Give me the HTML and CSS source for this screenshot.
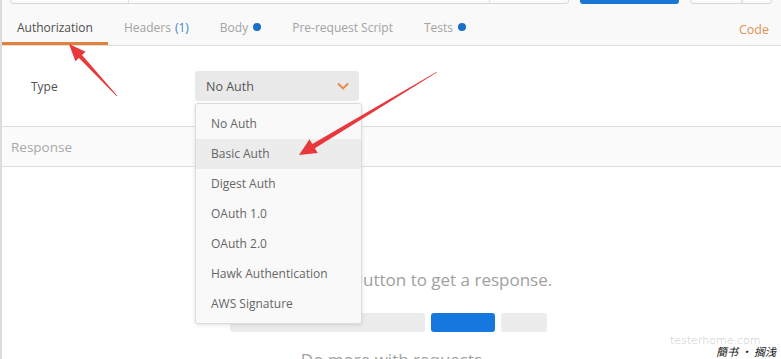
FILE: index.html
```html
<!DOCTYPE html>
<html lang="en">
<head>
    <meta charset="UTF-8">
    <meta name="viewport" content="width=device-width, initial-scale=1.0">
    <title>Authorization</title>
    <link rel="stylesheet" href="styles.css">
</head>
<body>
    <div class="page">
        <!-- url bar, only its lower edge is visible -->
        <div class="url-bar">
            <div class="url-field">
                <span class="seg seg-method"></span>
                <span class="seg seg-url"></span>
                <span class="seg seg-params"></span>
            </div>
            <div class="send-btn"></div>
            <div class="save-btn"><span class="seg seg-save"></span><span class="seg"></span></div>
        </div>

        <div class="tabs">
            <span class="tab active">Authorization</span>
            <span class="tab">Headers <span class="count">(1)</span></span>
            <span class="tab">Body <i class="dot"></i></span>
            <span class="tab">Pre-request Script</span>
            <span class="tab">Tests <i class="dot"></i></span>
            <span class="code-link">Code</span>
        </div>

        <div class="auth-row">
            <span class="auth-label">Type</span>
            <div class="select">
                <span>No Auth</span>
                <svg class="chevron" width="12" height="8" viewBox="0 0 12 8">
                    <path d="M1 1.5 L6 6.5 L11 1.5" fill="none" stroke="#e8873f" stroke-width="1.8"/>
                </svg>
            </div>
        </div>

        <div class="response-head">Response</div>

        <div class="empty">
            <p class="empty-text">Hit the Send button to get a response.</p>
            <div class="empty-bars">
                <span class="bar bar-url"></span>
                <span class="bar bar-send"></span>
                <span class="bar bar-save"></span>
            </div>
            <p class="empty-more">Do more with requests</p>
        </div>

        <ul class="menu">
            <li>No Auth</li>
            <li class="hover">Basic Auth</li>
            <li>Digest Auth</li>
            <li>OAuth 1.0</li>
            <li>OAuth 2.0</li>
            <li>Hawk Authentication</li>
            <li>AWS Signature</li>
        </ul>

        <!-- annotation arrows -->
        <svg class="arrows" width="781" height="359" viewBox="0 0 781 359">
            <polygon fill="#e8383b" points="117.3,95.8 116.7,96.2 79,57.9 75.4,61.2 69,44 85.6,51.8 82,55.1"/>
            <polygon fill="#e8383b" points="437.2,72.3 436.8,71.7 312.3,144.1 309.5,139.3 299,155 317.7,153.1 314.9,148.3"/>
        </svg>

        <div class="watermark">
            <span class="wm-site">testerhome.com</span>
            <span class="wm-name">簡书 • 搁浅</span>
        </div>
    </div>
</body>
</html>
```

FILE: styles.css
```css
body {
    margin: 0;
    font-family: 'Open Sans', 'Noto Sans', sans-serif;
    background: #fff;
}
.page {
    position: relative;
    width: 781px;
    height: 359px;
    overflow: hidden;
    border-left: 2px solid #dcdcdc;
    box-sizing: border-box;
    background: #fff;
}

/* top strip */
.url-bar {
    height: 4px;
    display: flex;
    align-items: flex-end;
    background: #f9f9f9;
    padding-left: 8px;
    overflow: hidden;
}
.url-field {
    display: flex;
    width: 557px;
    height: 30px;
    border: 1px solid #d8d8d8;
    border-radius: 3px;
    background: #fbfbfb;
    flex-shrink: 0;
}
.seg {
    height: 100%;
    border-right: 1px solid #e2e2e2;
}
.seg-method { width: 117px; }
.seg-url { width: 360px; }
.seg-params { border-right: 0; flex: 1; }
.send-btn {
    width: 99px;
    height: 30px;
    margin-left: 11px;
    background: #1976d2;
    border-radius: 3px;
    flex-shrink: 0;
}
.save-btn {
    display: flex;
    width: 80px;
    height: 30px;
    margin-left: 11px;
    border: 1px solid #d8d8d8;
    border-radius: 3px;
    background: #fbfbfb;
    flex-shrink: 0;
}
.seg-save { width: 50px; }

/* tabs */
.tabs {
    display: flex;
    align-items: stretch;
    height: 41px;
    background: #f9f9f9;
    border-bottom: 1px solid #dedede;
    font-size: 12px;
}
.tab {
    display: flex;
    align-items: center;
    padding: 8px 15px 0;
    color: #a3a3a3;
    border-bottom: 3px solid transparent;
    white-space: nowrap;
}
.tab.active {
    color: #4f4f4f;
    border-bottom-color: #e5803b;
}
.tab + .tab {
    margin-left: 1px;
}
.tab .count {
    color: #3b86c6;
    margin-left: 4px;
}
.dot {
    display: inline-block;
    width: 8px;
    height: 8px;
    margin-left: 5px;
    border-radius: 50%;
    background: #1a70c8;
}
.code-link {
    display: flex;
    align-items: center;
    margin-left: auto;
    padding: 10px 12px 0 0;
    color: #e0914f;
    font-size: 12.5px;
}

/* auth type */
.auth-row {
    display: flex;
    align-items: center;
    height: 81px;
    border-bottom: 1px solid #dedede;
    box-sizing: border-box;
    font-size: 12px;
}
.auth-label {
    width: 164px;
    padding-left: 29px;
    color: #505050;
}
.select {
    display: flex;
    align-items: center;
    justify-content: space-between;
    width: 164px;
    height: 30px;
    padding: 0 10px 0 11px;
    box-sizing: border-box;
    background: #e9e9e9;
    border-radius: 3px;
    color: #555;
    font-size: 12.5px;
}

.response-head {
    height: 39px;
    display: flex;
    align-items: center;
    padding-left: 9px;
    color: #a8a8a8;
    font-size: 13.5px;
    background: #fbfbfb;
    border-bottom: 1px solid #dedede;
}

/* empty state */
.empty {
    text-align: center;
    padding-top: 101px;
}
.empty-text {
    margin: 0;
    font-size: 17px;
    color: #a0a0a0;
    padding-left: 20px;
}
.empty-bars {
    display: flex;
    justify-content: center;
    gap: 6px;
    margin-top: 22px;
    padding-right: 6px;
}
.bar {
    height: 19px;
    border-radius: 3px;
    background: #ececec;
}
.bar-url { width: 195px; }
.bar-send { width: 64px; background: #1677de; }
.bar-save { width: 46px; }
.empty-more {
    margin: 16px 0 0;
    font-size: 17px;
    color: #a0a0a0;
}

/* dropdown */
.menu {
    position: absolute;
    left: 193px;
    top: 103px;
    width: 165px;
    margin: 0;
    padding: 5px 0 4px;
    list-style: none;
    background: #f9f9f9;
    border: 1px solid #dcdcdc;
    border-radius: 3px;
    box-shadow: 0 1px 4px rgba(0, 0, 0, 0.12);
    font-size: 12px;
    color: #666;
}
.menu li {
    height: 30px;
    line-height: 30px;
    padding-left: 15px;
}
.menu li.hover {
    background: #ececec;
}

.arrows {
    position: absolute;
    left: -2px;
    top: 0;
}

.watermark {
    position: absolute;
    right: 5px;
    bottom: 1px;
    width: 106px;
    height: 24px;
}
.wm-site {
    position: absolute;
    left: 0;
    top: 0;
    font-family: 'DejaVu Sans', sans-serif;
    font-size: 11px;
    font-weight: 200;
    color: #c8c8c8;
}
.wm-name {
    position: absolute;
    right: 0;
    bottom: 0;
    font-family: 'Noto Sans CJK SC', sans-serif;
    font-size: 11px;
    line-height: 14px;
    font-style: italic;
    color: #111;
    white-space: nowrap;
}
```
